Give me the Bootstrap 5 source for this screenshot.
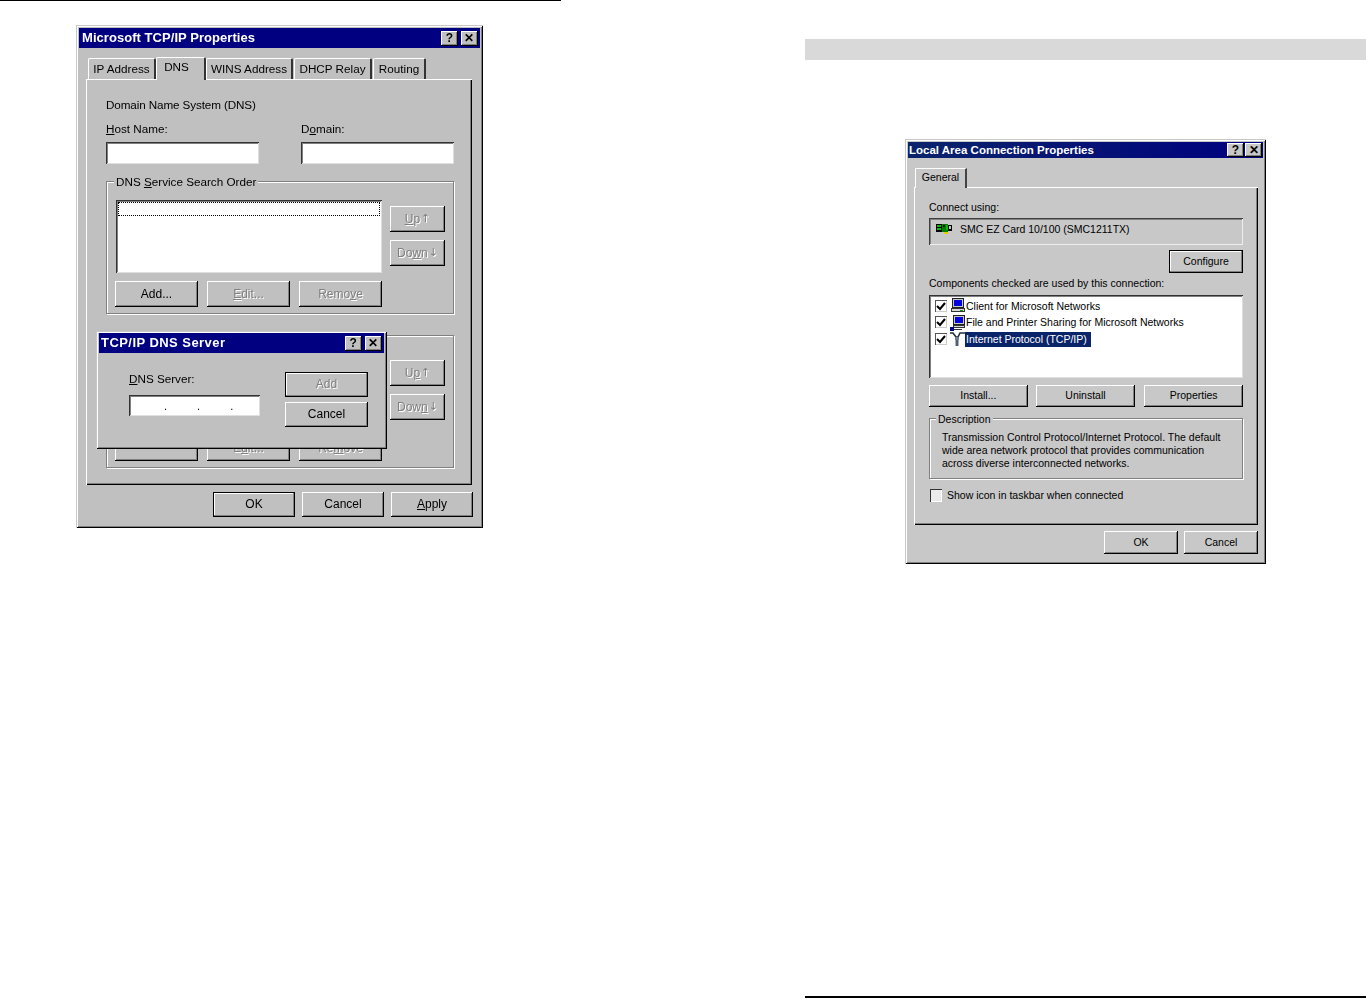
<!DOCTYPE html>
<html lang="en"><head><meta charset="utf-8"><title>Network properties</title>
<link href="https://cdn.jsdelivr.net/npm/bootstrap@5.3.0/dist/css/bootstrap.min.css" rel="stylesheet">
<style>
html,body{margin:0;background:#fff}
body{font-family:"Liberation Sans",Arial,sans-serif;font-size:11.7px;line-height:14px;color:#000;height:999px;overflow:hidden}
.leaf-left{width:561px;height:999px;border-top:1px solid #000;flex:none}
.leaf-right{width:561px;height:999px;margin-left:244px;flex:none}
.shade-bar{height:21px;margin-top:39px;background:#d9d9d9}
.end-rule{margin-top:auto;margin-bottom:1px;border-top:2px solid #000}
.win{background:#c0c0c0;padding:3px;box-shadow:inset 1px 1px #c8c8c8,inset -1px -1px #000,inset 2px 2px #fff,inset -2px -2px #808080}
.win-main{width:407px;height:503px;margin:24px 0 0 76px;position:relative;filter:blur(.4px)}
.titlebar{background:#000080;color:#fff;font-weight:700;display:flex;align-items:center;justify-content:space-between;padding:0 2px 0 3px}
.tb-main{height:20px;font-size:13px;letter-spacing:.05px}
.tb-dlg{letter-spacing:.45px;padding-left:2px}
.tb-net{height:16px;font-size:11.5px;background:linear-gradient(90deg,#0a246a,#000080);padding:0 1px 0 1px}
.capbtn{width:17px;height:15px;background:#c0c0c0;color:#000;display:inline-flex;align-items:center;justify-content:center;font:700 12px/1 "Liberation Sans",sans-serif;box-shadow:inset -1px -1px #000,inset 1px 1px #fff,inset -2px -2px #808080}
.capset{gap:3px}
.capset-net{gap:1px}
.capset-net .capbtn{height:14px}
.tabrow{height:31px;padding:10px 0 0 9px;align-items:flex-end}
.tabx{height:21px;padding:3px 0 0;text-align:center;background:#c0c0c0;border-top:1px solid #fff;border-left:1px solid #fff;border-right:2px solid #333;border-top-left-radius:2px;border-top-right-radius:2px}
.tabx.on{height:23px;position:relative;top:1px;z-index:2;padding:2px 8px 0 0;border-bottom:0}
.tab-1{width:68px}.tab-2{width:50px}.tab-3{width:87px}.tab-4{width:78px;margin-left:1px}.tab-5{width:53px;margin-left:1px}
.tabpanel{margin-left:7px;width:386px;height:406px;padding:19px 18px 0 20px;box-shadow:inset 1px 1px #fff,inset -1px -1px #000,inset -2px -2px #808080}
.lead-line{letter-spacing:-.12px}
.fields{margin-top:10px;gap:42px}
.fieldcol{width:153px}
.sunken{background:#fff;box-shadow:inset 1px 1px #333,inset -1px -1px #dfdfdf,inset 2px 2px #808080}
.field-h{height:22px;margin-top:6px}
.grp{position:relative;width:348px;border:1px solid #808080;box-shadow:1px 1px #fff,inset 1px 1px #fff;padding:18px 8px 0;height:133px}
.grp-1{margin-top:17px}
.grp-2{margin-top:21px}
.grp-cap{position:absolute;top:-7px;left:7px;background:#c0c0c0;padding:0 2px}
.dnslist{width:266px;height:73px;padding:2px;margin-left:1px}
.dotrow{height:14px;border:1px dotted #000}
.sidebtns{width:55px;margin-left:8px;padding-top:6px;gap:8px}
.w95btn{--bs-btn-padding-x:0;--bs-btn-padding-y:0;--bs-btn-font-size:12px;--bs-btn-line-height:14px;--bs-btn-border-radius:0;--bs-btn-border-width:0;--bs-btn-color:#000;--bs-btn-bg:#c0c0c0;background:#c0c0c0;color:#000;font-family:inherit;box-shadow:inset -1px -1px #000,inset 1px 1px #fff,inset -2px -2px #808080;display:flex;align-items:center;justify-content:center;padding:0 0 1px;border:0;border-radius:0}
.w95btn.off{color:#808080;text-shadow:1px 1px #fff}
.w95btn.dflt{box-shadow:inset 0 0 0 1px #000,inset -2px -2px #808080,inset 2px 2px #fff}
.arw{font-family:"DejaVu Sans",sans-serif;font-size:11px;margin-left:1px}
.bs{width:55px;height:26px}
.bw{width:83px;height:26px}
.bw-row{margin-top:8px;gap:9px}
.footer-main{margin-top:7px;padding-right:7px;justify-content:flex-end;gap:7px}
.footer-main .w95btn{width:82px;height:25px}
.dlg{position:absolute;left:20px;top:306px;width:291px;height:118px;z-index:5;padding-top:2px}
.dlg-body{padding:0 0 0 30px}
.dlg-left{width:156px;padding-top:19px}
.dlg-input{width:131px;height:21px;margin-top:9px;font-size:11px;line-height:20px;padding:1px 0 0 35px;word-spacing:27px}
.dlg-right{width:83px;padding-top:19px;gap:5px}
.dlg-right .w95btn{height:25px}
.win-net{width:361px;height:425px;margin:79px 0 0 100px;background:#c8c8c8;font-size:10.5px;line-height:13px}
.win-net .capbtn,.win-net .w95btn{background:#c8c8c8}
.win-net .w95btn{--bs-btn-font-size:10.5px;--bs-btn-line-height:13px}
.net-tabrow{height:29px;padding:9px 0 0 7px;align-items:flex-end}
.net-tab{width:52px;height:20px;background:#c8c8c8;border-top:1px solid #fff;border-left:1px solid #fff;border-right:2px solid #444;text-align:center;padding-top:2px;position:relative;top:1px;z-index:2}
.net-panel{margin-left:6px;width:344px;height:338px;padding:14px 15px 0;box-shadow:inset 1px 1px #fff,inset -1px -1px #000,inset -2px -2px #808080}
.cardbox{height:27px;margin-top:4px;padding:5px 0 0 7px;gap:8px;align-items:flex-start;box-shadow:inset 1px 1px #404040,inset -1px -1px #eee,inset 2px 2px #808080}
.ico-nic{margin-top:-1px}
.cfg-row{justify-content:flex-end;margin-top:5px}
.cfg-row .w95btn{width:74px;height:23px}
.net-note{margin-top:4px}
.complist{height:83px;margin-top:5px;padding:3px 0 0 6px;width:314px}
.comprow{height:16.5px;align-items:center}
.chk{width:12px;height:12px;background:#fff;flex:none;margin:-1px 3px 0 0;box-shadow:inset 1px 1px #555,inset -1px -1px #ccc;display:flex;align-items:center;justify-content:center}
.ico{width:16px;height:16px;flex:none}
.sel{background:#0a246a;color:#fff;padding:0 4px 0 1px;height:15px;line-height:15px;margin-left:-1px}
.net-btns{margin-top:7px;gap:8px}
.net-btns .w95btn{height:22px;width:99px}
.net-btns .w95btn.mid{width:100px}
.net-btns .w95btn.last{margin-left:1px}
.descgrp{width:314px;height:61px;margin-top:11px;padding:12px 0 0 12px;border:1px solid #808080;box-shadow:1px 1px #fff,inset 1px 1px #fff;position:relative}
.descgrp .grp-cap{background:#c8c8c8;left:6px;top:-6px}
.showrow{margin-top:10px;gap:5px;align-items:center}
.chk-big{width:12px;height:13px;margin:0 0 0 1px;background:#eaeaea;box-shadow:inset 1px 1px #333,inset -1px -1px #fff}
.net-foot{margin-top:6px;padding-right:5px;justify-content:flex-end;gap:6px}
.net-foot .w95btn{width:74px;height:23px}
</style></head>
<body>
<div class="d-flex">
 <div class="leaf-left">
  <div class="win win-main">
   <div class="titlebar tb-main"><span>Microsoft TCP/IP Properties</span><span class="d-flex capset"><span class="capbtn">?</span><span class="capbtn">✕</span></span></div>
   <div class="d-flex tabrow">
    <div class="tabx tab-1">IP Address</div><div class="tabx on tab-2">DNS</div><div class="tabx tab-3">WINS Address</div><div class="tabx tab-4">DHCP Relay</div><div class="tabx tab-5">Routing</div>
   </div>
   <div class="tabpanel">
    <div class="lead-line">Domain Name System (DNS)</div>
    <div class="d-flex fields">
     <div class="fieldcol"><div><u>H</u>ost Name:</div><div class="sunken field-h"></div></div>
     <div class="fieldcol"><div>D<u>o</u>main:</div><div class="sunken field-h"></div></div>
    </div>
    <div class="grp grp-1">
     <span class="grp-cap">DNS <u>S</u>ervice Search Order</span>
     <div class="d-flex">
      <div class="sunken dnslist"><div class="dotrow"></div></div>
      <div class="d-flex flex-column sidebtns">
       <button class="btn w95btn off bs" type="button"><u>U</u>p<span class="arw">↑</span></button>
       <button class="btn w95btn off bs" type="button">Do<u>w</u>n<span class="arw">↓</span></button>
      </div>
     </div>
     <div class="d-flex bw-row">
      <button class="btn w95btn bw" type="button">Add...</button>
      <button class="btn w95btn off bw" type="button"><u>E</u>dit...</button>
      <button class="btn w95btn off bw" type="button">Remo<u>v</u>e</button>
     </div>
    </div>
    <div class="grp grp-2">
     <div class="d-flex">
      <div class="dnslist"></div>
      <div class="d-flex flex-column sidebtns">
       <button class="btn w95btn off bs" type="button">U<u>p</u><span class="arw">↑</span></button>
       <button class="btn w95btn off bs" type="button">Dow<u>n</u><span class="arw">↓</span></button>
      </div>
     </div>
     <div class="d-flex bw-row">
      <button class="btn w95btn bw" type="button"></button>
      <button class="btn w95btn off bw" type="button">E<u>d</u>it...</button>
      <button class="btn w95btn off bw" type="button">Re<u>m</u>ove</button>
     </div>
    </div>
   </div>
   <div class="d-flex footer-main">
    <button class="btn w95btn dflt" type="button">OK</button>
    <button class="btn w95btn" type="button">Cancel</button>
    <button class="btn w95btn" type="button"><u>A</u>pply</button>
   </div>
   <div class="win dlg">
    <div class="titlebar tb-main tb-dlg"><span>TCP/IP DNS Server</span><span class="d-flex capset"><span class="capbtn">?</span><span class="capbtn">✕</span></span></div>
    <div class="d-flex dlg-body">
     <div class="dlg-left"><div><u>D</u>NS Server:</div><div class="sunken dlg-input">. . .</div></div>
     <div class="d-flex flex-column dlg-right">
      <button class="btn w95btn off dflt" type="button">Add</button>
      <button class="btn w95btn" type="button">Cancel</button>
     </div>
    </div>
   </div>
  </div>
 </div>
 <div class="leaf-right d-flex flex-column">
  <div class="shade-bar"></div>
  <div class="win win-net">
   <div class="titlebar tb-net"><span>Local Area Connection Properties</span><span class="d-flex capset-net"><span class="capbtn">?</span><span class="capbtn">✕</span></span></div>
   <div class="d-flex net-tabrow"><div class="net-tab">General</div></div>
   <div class="net-panel">
    <div>Connect using:</div>
    <div class="d-flex cardbox">
     <svg class="ico ico-nic" viewBox="0 0 16 16" shape-rendering="crispEdges"><rect x="0" y="2" width="12" height="8" fill="#000"/><rect x="1" y="3" width="4" height="2" fill="#00c000"/><rect x="1" y="6" width="4" height="2" fill="#00c000"/><rect x="6" y="2" width="6" height="8" fill="#008000"/><rect x="7" y="3" width="2" height="2" fill="#000"/><rect x="10" y="3" width="2" height="5" fill="#00c000"/><rect x="12" y="3" width="4" height="6" fill="#000"/><rect x="13" y="4" width="2" height="3" fill="#c8c8c8"/><rect x="8" y="10" width="4" height="2" fill="#e8d000"/></svg>
     <span>SMC EZ Card 10/100 (SMC1211TX)</span>
    </div>
    <div class="d-flex cfg-row"><button class="btn w95btn dflt" type="button">Configure</button></div>
    <div class="net-note">Components checked are used by this connection:</div>
    <div class="sunken complist">
     <div class="d-flex comprow"><span class="chk"><svg width="10" height="10" viewBox="0 0 10 10"><path d="M1 5l3 3 5-6" fill="none" stroke="#000" stroke-width="2"/></svg></span><svg class="ico" viewBox="0 0 16 16" shape-rendering="crispEdges"><rect x="2.5" y="0.5" width="11" height="9" fill="#c8c8c8" stroke="#222"/><rect x="4" y="2" width="8" height="6" fill="#0000e0"/><rect x="1.5" y="10.5" width="13" height="3" fill="#d8d8d8" stroke="#333"/><rect x="10" y="12" width="3" height="1" fill="#00a000"/></svg><span>Client for Microsoft Networks</span></div>
     <div class="d-flex comprow"><span class="chk"><svg width="10" height="10" viewBox="0 0 10 10"><path d="M1 5l3 3 5-6" fill="none" stroke="#000" stroke-width="2"/></svg></span><svg class="ico" viewBox="0 0 16 16" shape-rendering="crispEdges"><rect x="3.5" y="0.5" width="11" height="9" fill="#c8c8c8" stroke="#222"/><rect x="5" y="2" width="8" height="6" fill="#0000e0"/><rect x="3.5" y="10.5" width="11" height="2" fill="#d8d8d8" stroke="#333"/><rect x="0" y="12" width="4" height="4" fill="#000080"/><rect x="4" y="14" width="8" height="1" fill="#333"/></svg><span>File and Printer Sharing for Microsoft Networks</span></div>
     <div class="d-flex comprow"><span class="chk"><svg width="10" height="10" viewBox="0 0 10 10"><path d="M1 5l3 3 5-6" fill="none" stroke="#000" stroke-width="2"/></svg></span><svg class="ico" viewBox="0 0 16 16"><path d="M0 2h3l3 4h2l2-4h6" fill="none" stroke="#203040" stroke-width="1.6"/><rect x="5" y="6" width="4" height="3" fill="#708090"/><rect x="5.5" y="9" width="3" height="6" fill="#506070"/></svg><span class="sel">Internet Protocol (TCP/IP)</span></div>
    </div>
    <div class="d-flex net-btns">
     <button class="btn w95btn" type="button">Install...</button>
     <button class="btn w95btn mid" type="button">Uninstall</button>
     <button class="btn w95btn last" type="button">Properties</button>
    </div>
    <div class="descgrp"><span class="grp-cap">Description</span>Transmission Control Protocol/Internet Protocol. The default<br>wide area network protocol that provides communication<br>across diverse interconnected networks.</div>
    <div class="d-flex showrow"><span class="chk chk-big"></span><span>Show icon in taskbar when connected</span></div>
   </div>
   <div class="d-flex net-foot">
    <button class="btn w95btn" type="button">OK</button>
    <button class="btn w95btn" type="button">Cancel</button>
   </div>
  </div>
  <div class="end-rule"></div>
 </div>
</div>
</body></html>
